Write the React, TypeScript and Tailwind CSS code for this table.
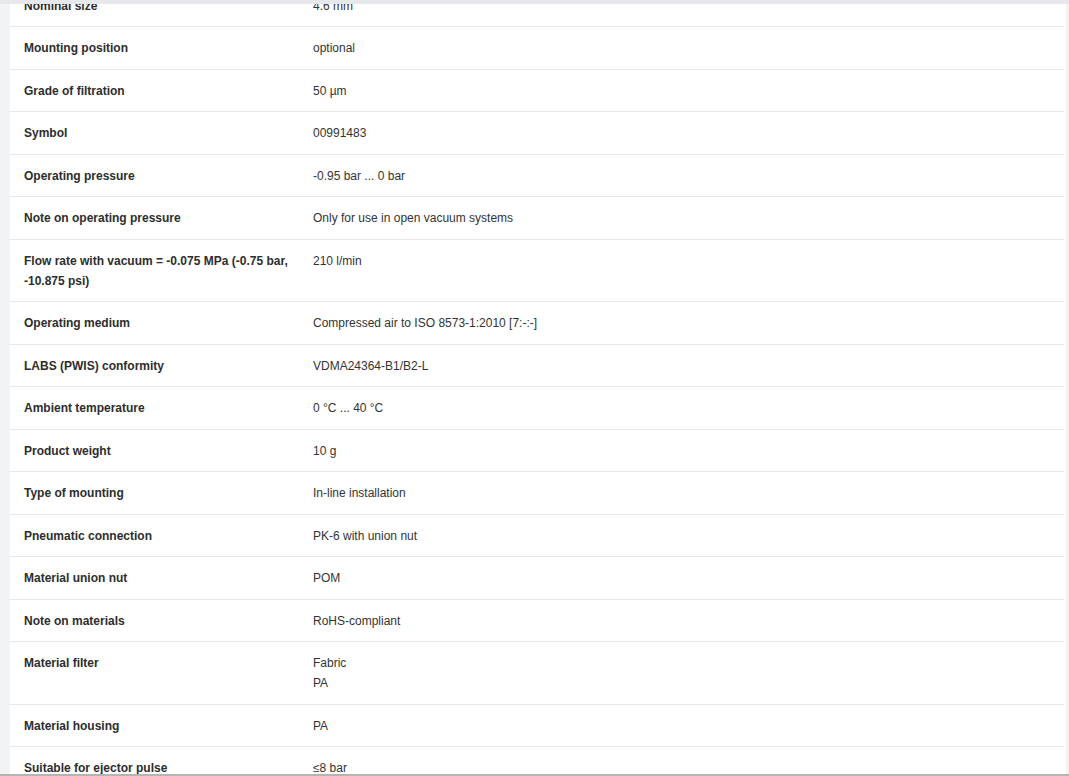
const rows: { label: string; value: string[] }[] = [
  { label: 'Nominal size', value: ['4.6 mm'] },
  { label: 'Mounting position', value: ['optional'] },
  { label: 'Grade of filtration', value: ['50 µm'] },
  { label: 'Symbol', value: ['00991483'] },
  { label: 'Operating pressure', value: ['-0.95 bar ... 0 bar'] },
  { label: 'Note on operating pressure', value: ['Only for use in open vacuum systems'] },
  { label: 'Flow rate with vacuum = -0.075 MPa (-0.75 bar, -10.875 psi)', value: ['210 l/min'] },
  { label: 'Operating medium', value: ['Compressed air to ISO 8573-1:2010 [7:-:-]'] },
  { label: 'LABS (PWIS) conformity', value: ['VDMA24364-B1/B2-L'] },
  { label: 'Ambient temperature', value: ['0 °C ... 40 °C'] },
  { label: 'Product weight', value: ['10 g'] },
  { label: 'Type of mounting', value: ['In-line installation'] },
  { label: 'Pneumatic connection', value: ['PK-6 with union nut'] },
  { label: 'Material union nut', value: ['POM'] },
  { label: 'Note on materials', value: ['RoHS-compliant'] },
  { label: 'Material filter', value: ['Fabric', 'PA'] },
  { label: 'Material housing', value: ['PA'] },
  { label: 'Suitable for ejector pulse', value: ['≤8 bar'] },
];

export default function App() {
  return (
    <div
      className="flex h-[776px] flex-col overflow-hidden bg-[#f2f3f5] text-[12px] leading-[20px] text-[#333333]"
      style={{ fontFamily: '"Liberation Sans", Arial, sans-serif' }}
    >
      <div className="h-[4px] shrink-0 bg-[#e6e8eb]" />
      <div className="flex min-h-0 flex-1">
        <div className="w-[10px] shrink-0" />
        <div className="min-h-0 flex-1 overflow-hidden bg-white">
          <div className="-mt-[19.5px] pr-[2px]">
            {rows.map((row) => (
              <div key={row.label} className="flex border-b border-[#e8e8e8] pt-[11px] pb-[10.5px]">
                <div className="w-[300px] shrink-0 pl-[14px] pr-[20px] font-bold text-[#2d2d2d]">
                  {row.label}
                </div>
                <div className="flex-1 pl-[3px]">
                  {row.value.map((v) => (
                    <div key={v}>{v}</div>
                  ))}
                </div>
              </div>
            ))}
          </div>
        </div>
        <div className="w-[3px] shrink-0" />
      </div>
      <div className="h-[2px] shrink-0 bg-[#b4b4b4]" />
    </div>
  );
}
